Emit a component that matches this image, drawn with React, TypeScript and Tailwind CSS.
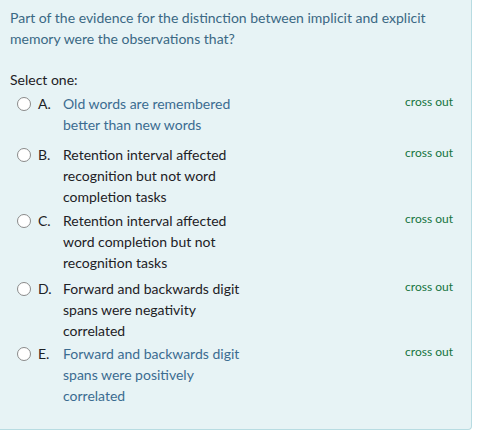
import React from "react";

type Opt = { letter: string; lines: string[]; muted: boolean; mt: string };

const options: Opt[] = [
  { letter: "A.", lines: ["Old words are remembered", "better than new words"], muted: true, mt: "mt-[3px]" },
  { letter: "B.", lines: ["Retention interval affected", "recognition but not word", "completion tasks"], muted: false, mt: "mt-[9px]" },
  { letter: "C.", lines: ["Retention interval affected", "word completion but not", "recognition tasks"], muted: false, mt: "mt-[3px]" },
  { letter: "D.", lines: ["Forward and backwards digit", "spans were negativity", "correlated"], muted: false, mt: "mt-[5px]" },
  { letter: "E.", lines: ["Forward and backwards digit", "spans were positively", "correlated"], muted: true, mt: "mt-[2px]" },
];

export default function App() {
  return (
    <div className="w-[486px] h-[431px] bg-white" style={{ fontFamily: "Lato, 'Open Sans', sans-serif" }}>
      <div className="w-[472px] h-[430px] bg-[#e7f3f5] border-r border-b border-[#b8dce2] rounded-br-[4px] pt-[7px] pl-[10px] pr-[18px]">
        <p className="text-[14px] leading-[21px] text-[#3a6884]">
          Part of the evidence for the distinction between implicit and explicit
          <br />
          memory were the observations that?
        </p>
        <div className="mt-[20px] text-[14px] leading-[21px] text-[#1d2125]">Select one:</div>
        {options.map((o) => (
          <div key={o.letter} className={`flex items-start ${o.mt}`}>
            <div className="h-[21px] flex items-center ml-[7px]">
              <span className="block w-[14px] h-[14px] rounded-full border border-[#8a8a8a] bg-white" />
            </div>
            <span className="ml-[7px] w-[25px] text-[14px] leading-[21px] text-[#1d2125]">{o.letter}</span>
            <div className={`flex-1 text-[14px] leading-[21px] ${o.muted ? "text-[#3b6c91]" : "text-[#1d2125]"}`}>
              {o.lines.map((l, i) => (
                <div key={i}>{l}</div>
              ))}
            </div>
            <span className="-mt-[1px] text-[12px] leading-[19px] text-[#16733f]">cross out</span>
          </div>
        ))}
      </div>
    </div>
  );
}
